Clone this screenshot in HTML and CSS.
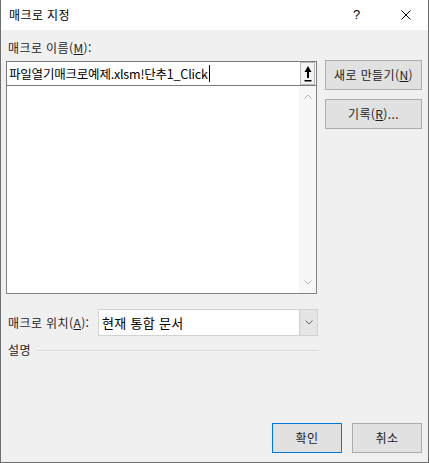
FILE: index.html
```html
<!DOCTYPE html>
<html lang="ko">
<head>
<meta charset="utf-8">
<title>매크로 지정</title>
<link rel="stylesheet" href="styles.css">
</head>
<body>
<div class="window">
  <div class="titlebar">
    <span class="title">매크로 지정</span>
    <span class="help">?</span>
    <span class="close">
      <svg width="10" height="10" viewBox="0 0 10 10"><path d="M0.5 0.5 L9.5 9.5 M9.5 0.5 L0.5 9.5" stroke="#000" stroke-width="1" fill="none"/></svg>
    </span>
  </div>
  <div class="content">
    <div class="label">매크로 이름(<u>M</u>):</div>
    <div class="main">
      <div class="left">
        <div class="textbox">
          <span class="value">파일열기매크로예제.xlsm!단추1_Click</span><span class="caret"></span>
          <span class="refbtn">
            <svg width="8" height="17" viewBox="0 0 8 17"><path d="M4 1 L7.5 7 L5 7 L5 13 L3 13 L3 7 L0.5 7 Z" fill="#000"/><rect x="0.5" y="15" width="7" height="1.5" fill="#000"/></svg>
          </span>
        </div>
        <div class="listbox">
          <div class="scroll">
            <svg width="8" height="5" viewBox="0 0 8 5"><path d="M0.5 4.5 L4 1 L7.5 4.5" stroke="#b4b4b4" stroke-width="1" fill="none"/></svg>
            <svg width="8" height="5" viewBox="0 0 8 5"><path d="M0.5 0.5 L4 4 L7.5 0.5" stroke="#b4b4b4" stroke-width="1" fill="none"/></svg>
          </div>
        </div>
      </div>
      <div class="right">
        <div class="btn side">새로 만들기(<u>N</u>)</div>
        <div class="btn side">기록(<u>R</u>)...</div>
      </div>
    </div>
    <div class="location">
      <span class="loclabel">매크로 위치(<u>A</u>):</span>
      <div class="combo">
        <span class="combotext">현재 통합 문서</span>
        <span class="dropbtn">
          <svg width="8" height="5" viewBox="0 0 8 5"><path d="M0.5 0.5 L4 4 L7.5 0.5" stroke="#606060" stroke-width="1" fill="none"/></svg>
        </span>
      </div>
    </div>
    <div class="desc">
      <span>설명</span>
      <span class="line"></span>
    </div>
    <div class="spacer"></div>
    <div class="footer">
      <div class="btn default">확인</div>
      <div class="btn">취소</div>
    </div>
  </div>
</div>
</body>
</html>
```
FILE: styles.css
```css
* { box-sizing: border-box; }
html, body { margin: 0; padding: 0; }
body {
  font-family: "Noto Sans CJK KR", "Noto Sans", sans-serif;
  font-size: 12px;
  letter-spacing: 0.4px;
  color: #000;
  background: #f0f0f0;
}
u { text-decoration: underline; text-underline-offset: 1px; }
.window {
  width: 429px;
  height: 463px;
  background: #f0f0f0;
  border-left: 1px solid #6e6e6e;
  border-right: 1px solid #6e6e6e;
  border-bottom: 1px solid #6e6e6e;
  display: flex;
  flex-direction: column;
}
.titlebar {
  height: 30px;
  background: #fff;
  display: flex;
  align-items: center;
  padding-left: 8px;
  flex-shrink: 0;
}
.title { flex: 1; line-height: 16px; }
.help {
  width: 10px;
  margin-right: 38px;
  font-size: 13px;
  line-height: 16px;
  font-family: "Liberation Sans", sans-serif;
}
.close {
  width: 10px;
  height: 10px;
  margin-right: 17px;
  display: flex;
}
.content {
  flex: 1;
  display: flex;
  flex-direction: column;
  padding: 0 6px 9px 5px;
}
.label {
  margin-top: 10px;
  line-height: 16px;
  height: 16px;
  padding-left: 2px;
  color: #1e1e1e;
}
.main {
  margin-top: 4px;
  display: flex;
  gap: 8px;
}
.left {
  width: 311px;
  margin-top: 1px;
  display: flex;
  flex-direction: column;
}
.textbox {
  height: 25px;
  background: #fff;
  border: 1px solid #7a7a7a;
  display: flex;
  align-items: center;
  padding-left: 2px;
}
.value { font-size: 12.5px; line-height: 16px; letter-spacing: -0.2px; }
.caret {
  width: 1px;
  height: 17px;
  background: #000;
  margin-left: 1px;
}
.refbtn {
  margin-left: auto;
  width: 15px;
  height: 23px;
  background: #f3f3f3;
  border: 1px solid #b8b8b8;
  margin-right: 1px;
  display: flex;
  align-items: center;
  justify-content: center;
}
.listbox {
  height: 208px;
  background: #fff;
  border: 1px solid #828282;
  border-top: none;
  display: flex;
  justify-content: flex-end;
}
.scroll {
  width: 17px;
  background: #f7f7f7;
  display: flex;
  flex-direction: column;
  justify-content: space-between;
  align-items: center;
  padding: 8px 0 8px;
}
.right {
  display: flex;
  flex-direction: column;
  gap: 9px;
}
.btn {
  width: 70px;
  height: 30px;
  background: #e1e1e1;
  border: 1px solid #adadad;
  display: flex;
  align-items: center;
  justify-content: center;
  line-height: 16px;
  color: #1e1e1e;
}
.btn.side { width: 97px; }
.btn.default { border-color: #0078d7; }
.location {
  margin-top: 15px;
  display: flex;
  align-items: center;
}
.loclabel {
  width: 92px;
  padding-left: 2px;
  line-height: 16px;
  color: #1e1e1e;
}
.combo {
  width: 220px;
  height: 27px;
  background: #fff;
  border: 1px solid #d2d2d2;
  display: flex;
  align-items: center;
  padding-left: 3px;
}
.combotext { flex: 1; font-size: 13px; line-height: 16px; letter-spacing: 0.3px; }
.dropbtn {
  width: 18px;
  height: 25px;
  background: #e5e5e5;
  border-left: 1px solid #cfcfcf;
  display: flex;
  align-items: center;
  justify-content: center;
}
.desc {
  margin-top: 6px;
  display: flex;
  align-items: center;
  gap: 5px;
  padding-left: 2px;
  height: 16px;
  color: #1e1e1e;
  line-height: 16px;
}
.line {
  width: 283px;
  height: 1px;
  background: #dcdcdc;
  margin-top: 1px;
}
.spacer { flex: 1; }
.footer {
  display: flex;
  justify-content: flex-end;
  gap: 10px;
}
```
